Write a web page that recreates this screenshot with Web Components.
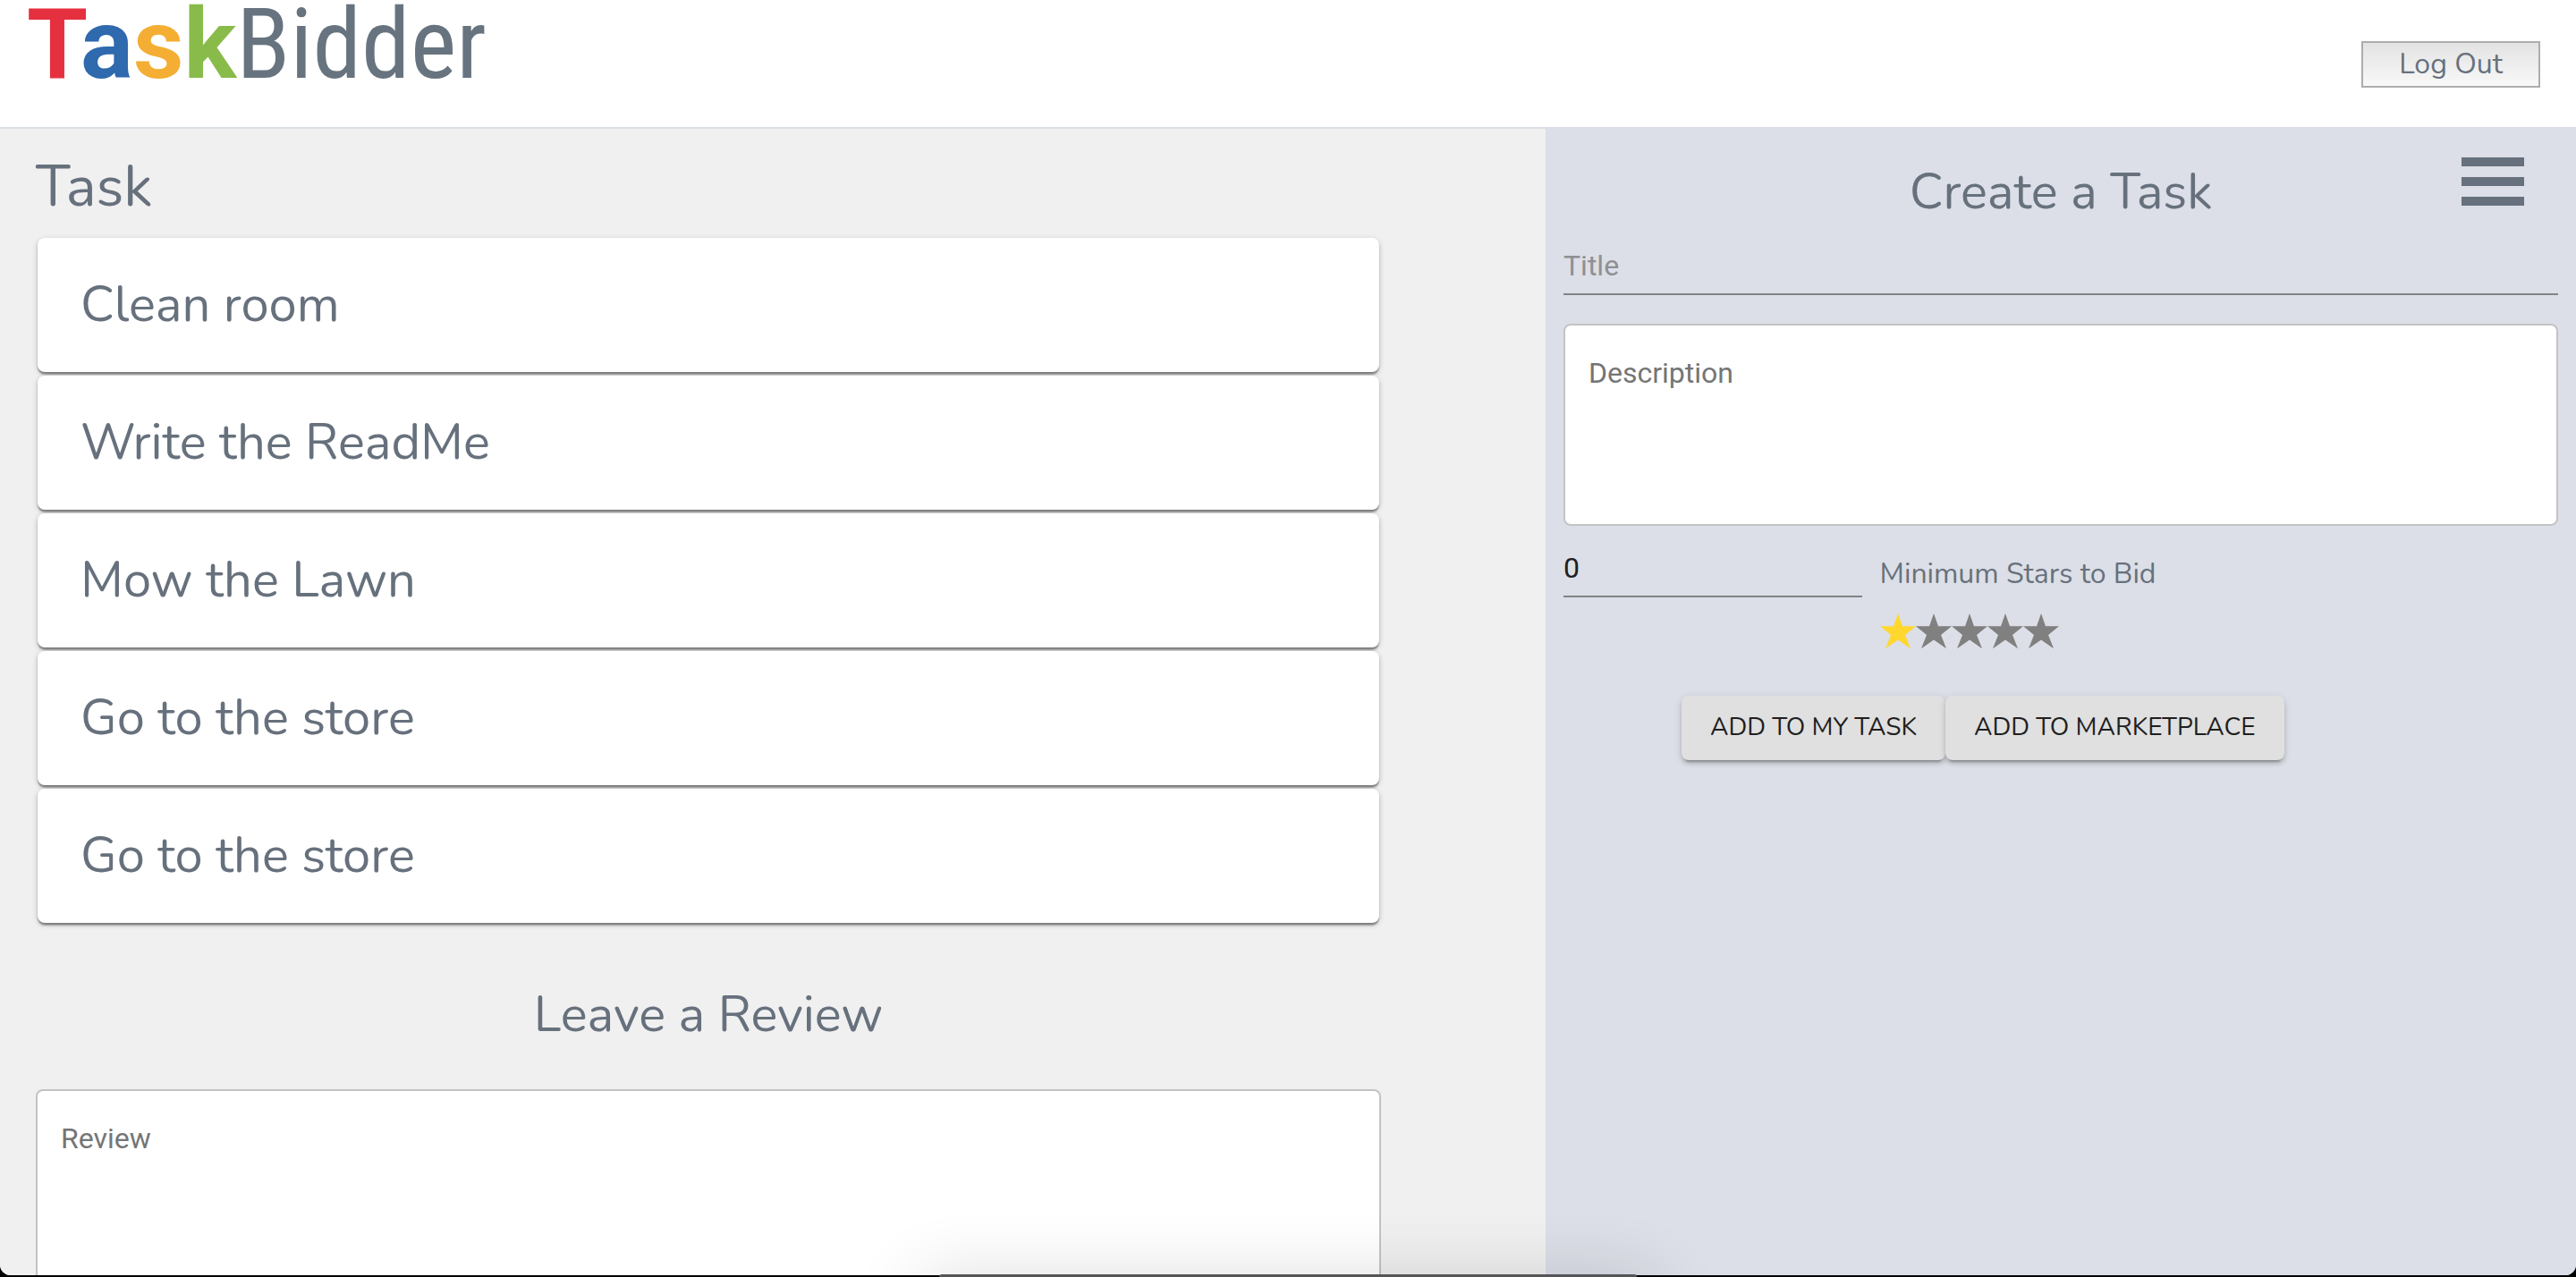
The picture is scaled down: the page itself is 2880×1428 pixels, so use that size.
<!DOCTYPE html>
<html lang="en">
<head>
<meta charset="utf-8">
<title>TaskBidder</title>
<style>
  html { background: #000; }
  body {
    margin: 0;
    height: 100vh;
    overflow: hidden;
    color: #67717d;
    font-family: Nunito, Lato, sans-serif;
    --ui: Roboto, sans-serif;
    --panel: #dcdfe7;
    --page: #f0f0f0;
  }
</style>
</head>
<body>
<task-app>
  <app-header slot="header"></app-header>
  <task-list slot="main" heading="Task">
    <task-card>Clean room</task-card>
    <task-card>Write the ReadMe</task-card>
    <task-card>Mow the Lawn</task-card>
    <task-card>Go to the store</task-card>
    <task-card>Go to the store</task-card>
  </task-list>
  <review-form slot="main"></review-form>
  <create-task slot="side"></create-task>
</task-app>
<dock-edge></dock-edge>

<script>
const define = (name, html, setup) => {
  const template = document.createElement('template');
  template.innerHTML = '<style>*{box-sizing:border-box}</style>' + html;
  customElements.define(name, class extends HTMLElement {
    connectedCallback() {
      if (this.shadowRoot) return;
      this.attachShadow({ mode: 'open' }).append(template.content.cloneNode(true));
      if (setup) setup(this, this.shadowRoot);
    }
  });
};

define('task-app', `
<style>
  :host { display: flex; flex-direction: column; height: calc(100vh - 2px); overflow: hidden;
          background: #fff; border-radius: 0 0 12px 12px; }
  .columns { flex: 1; min-height: 0; display: grid; grid-template-columns: 3fr 2fr; }
  main { min-width: 0; padding: 26px 184px 0 40px; background: var(--page); border-top: 2px solid #dadfe5; }
  aside { min-width: 0; padding: 32px 20px 0; background: var(--panel); }
</style>
<slot name="header"></slot>
<div class="columns">
  <main><slot name="main"></slot></main>
  <aside><slot name="side"></slot></aside>
</div>`);

define('app-header', `
<style>
  :host { display: block; }
  header { display: flex; justify-content: space-between; align-items: center; height: 142px; padding: 2px 40px 0 30px; }
  .logo { align-self: flex-start; font: 400 110px/96px var(--ui); color: #67747f; white-space: nowrap; }
  b { font-weight: 700; }
  .rest { font-family: "Roboto Condensed", "Liberation Sans Narrow", Roboto, sans-serif; }
  .t { color: #e53040; } .a { color: #2f69ae; } .s { color: #f4ae33; } .k { color: #89bb4a; }
  button { width: 200px; height: 52px; padding: 0; font: 32px/44px Nunito, Lato, sans-serif; color: #67717d;
           border: 2px solid #adadad; border-radius: 0; background: linear-gradient(#e3e3e3, #f8f8f8); }
</style>
<header>
  <div class="logo"><b><span class="t">T</span><span class="a">a</span><span class="s">s</span><span class="k">k</span></b><span class="rest">Bidder</span></div>
  <button type="button">Log Out</button>
</header>`);

define('task-list', `
<style>
  :host { display: block; }
  h1 { margin: 0 0 18px; font-size: 64px; line-height: 78px; font-weight: 400; }
  .cards { display: flex; flex-direction: column; gap: 4px; padding: 0 2px; }
</style>
<h1></h1>
<div class="cards"><slot></slot></div>`, (host, root) => {
  root.querySelector('h1').textContent = host.getAttribute('heading');
});

define('task-card', `
<style>
  :host { display: block; padding: 40px 48px; background: #fff; border-radius: 8px;
          font-size: 56px; line-height: 70px;
          box-shadow: 0 2px 6px rgba(0,0,0,.2), 0 2px 2px rgba(0,0,0,.24), 0 4px 2px -1px rgba(0,0,0,.22); }
</style>
<slot></slot>`);

define('text-area', `
<style>
  :host { display: grid; }
  label, textarea { grid-area: 1 / 1; font: 32px/38px var(--ui); }
  label { z-index: 1; justify-self: start; align-self: start; padding: 36px 28px; color: #757575; pointer-events: none; }
  textarea { width: 100%; height: 226px; padding: 34px 26px; resize: none; background: #fff; color: #222;
             border: 2px solid #c3c3c3; border-radius: 8px; }
</style>
<label for="field"></label>
<textarea id="field"></textarea>`, (host, root) => {
  root.querySelector('label').textContent = host.getAttribute('label');
});

define('line-field', `
<style>
  :host { display: grid; }
  label, input { grid-area: 1 / 1; font: 32px/38px var(--ui); }
  label { z-index: 1; justify-self: start; color: #8f9094; pointer-events: none; }
  input { width: 100%; height: 52px; padding: 0 0 12px; border: 0; border-bottom: 2px solid #828387; border-radius: 0;
          background: none; color: #202020; }
</style>
<label for="field"></label>
<input id="field" type="text">`, (host, root) => {
  const input = root.querySelector('input');
  if (host.hasAttribute('value')) {
    root.querySelector('label').remove();
    input.value = host.getAttribute('value');
    input.inputMode = 'numeric';
    input.setAttribute('aria-label', host.getAttribute('label'));
  } else {
    root.querySelector('label').textContent = host.getAttribute('label');
  }
});

define('star-rating', `
<style>
  :host { display: block; }
  fieldset { margin: 0; padding: 0; border: 0; min-width: 0; }
  legend { padding: 0; font-size: 32px; line-height: 44px; }
  .stars { display: flex; padding-top: 22px; }
  label { display: grid; width: 40px; height: 44px; color: #808080; }
  label.on { color: #ffd72f; }
  input, svg { grid-area: 1 / 1; width: 40px; height: 40px; margin: 0; }
  input { appearance: none; }
</style>
<fieldset>
  <legend>Minimum Stars to Bid</legend>
  <div class="stars"></div>
</fieldset>`, (host, root) => {
  const value = Number(host.getAttribute('value'));
  const row = root.querySelector('.stars');
  for (let n = 1; n <= 5; n++) {
    row.insertAdjacentHTML('beforeend', `
      <label class="${n <= value ? 'on' : ''}"><input type="radio" name="stars" aria-label="${n}" ${n === value ? 'checked' : ''}>
      <svg viewBox="0 0 40 40" aria-hidden="true"><path fill="currentColor" d="M20 0 25 14.3H40L28 24 34 39.3 20 29.5 6 39.3 12 24 0 14.3H15Z"/></svg></label>`);
  }
  row.addEventListener('change', e => {
    const all = [...row.children];
    const at = all.indexOf(e.target.parentNode);
    all.forEach((label, i) => label.classList.toggle('on', i <= at));
  });
});

define('raised-button', `
<style>
  :host { display: block; }
  button { display: block; height: 72px; padding: 0 32px 2px; border: 0; border-radius: 8px; background: #e0e0e0; color: #1f1f1f;
           font: 28px/40px Nunito, Lato, sans-serif; text-transform: uppercase; white-space: nowrap;
           box-shadow: 0 6px 2px -4px rgba(0,0,0,.2), 0 4px 4px rgba(0,0,0,.14), 0 2px 10px rgba(0,0,0,.12); }
</style>
<button type="button"><slot></slot></button>`);

define('review-form', `
<style>
  :host { display: block; padding-top: 68px; }
  h2 { margin: 0 0 48px; font-size: 56px; line-height: 70px; font-weight: 400; text-align: center; }
</style>
<h2>Leave a Review</h2>
<text-area label="Review"></text-area>`);

define('create-task', `
<style>
  :host { display: block; }
  .head { display: grid; grid-template-columns: 1fr auto 1fr; }
  h2 { grid-column: 2; margin: 0; padding-top: 6px; font-size: 56px; line-height: 70px; font-weight: 400; }
  .menu { justify-self: end; align-self: start; display: flex; padding: 2px 38px 0 0; border: 0; background: none; color: #67717d; }
  form { display: flex; flex-direction: column; }
  text-area { margin: 32px 0 24px; }
  line-field.title { margin-top: 28px; }
  .row { display: flex; gap: 20px; align-items: flex-start; }
  .row line-field { flex: 0 0 30%; margin-top: 4px; }
  .row star-rating { margin-top: 8px; }
  .actions { display: flex; padding: 48px 0 0 132px; }
</style>
<div class="head">
  <h2>Create a Task</h2>
  <button class="menu" type="button" aria-label="Menu">
    <svg width="70" height="54" viewBox="0 0 70 54" fill="currentColor" aria-hidden="true"><path d="M0 0H70V10H0ZM0 22H70V32H0ZM0 44H70V54H0Z"/></svg>
  </button>
</div>
<form>
  <line-field class="title" label="Title"></line-field>
  <text-area label="Description"></text-area>
  <div class="row">
    <line-field label="Price" value="0"></line-field>
    <star-rating value="1"></star-rating>
  </div>
  <div class="actions">
    <raised-button>Add to my task</raised-button>
    <raised-button>Add to marketplace</raised-button>
  </div>
</form>`);

/* top edge of the desktop dock, with the shadow it casts on the window */
define('dock-edge', `
<style>
  :host { position: fixed; inset: auto 0 0; height: 100px; overflow: hidden; pointer-events: none; display: flex; align-items: flex-end; justify-content: center; }
  div { width: 780px; height: 3px; background: #555457; border-radius: 4px 4px 0 0;
        box-shadow: 0 30px 80px 20px rgba(0,0,0,.2); }
</style>
<div></div>`);
</script>
</body>
</html>
